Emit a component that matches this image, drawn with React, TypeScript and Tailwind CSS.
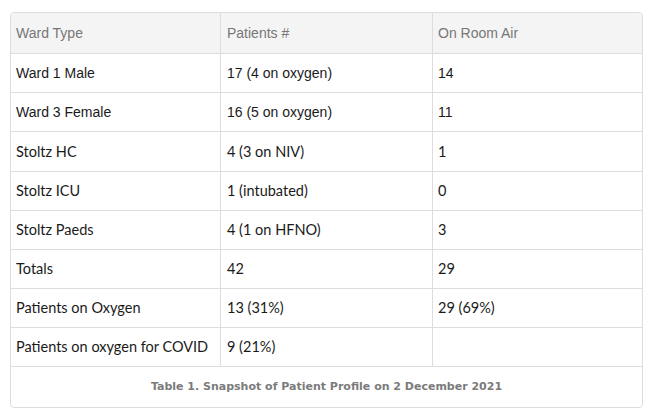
import React from "react";

const rows: { a: string; b: string; c: string; alt?: boolean; h?: string }[] = [
  { a: "Ward 1 Male", b: "17 (4 on oxygen)", c: "14", h: "h-[38px]" },
  { a: "Ward 3 Female", b: "16 (5 on oxygen)", c: "11", h: "h-[38px]" },
  { a: "Stoltz HC", b: "4 (3 on NIV)", c: "1", alt: true, h: "h-[39px]" },
  { a: "Stoltz ICU", b: "1 (intubated)", c: "0", alt: true, h: "h-[38px]" },
  { a: "Stoltz Paeds", b: "4 (1 on HFNO)", c: "3", alt: true, h: "h-[38px]" },
  { a: "Totals", b: "42", c: "29", alt: true, h: "h-[38px]" },
  { a: "Patients on Oxygen", b: "13 (31%)", c: "29 (69%)", alt: true, h: "h-[38px]" },
  { a: "Patients on oxygen for COVID", b: "9 (21%)", c: "", alt: true, h: "h-[38px]" },
];

export default function App() {
  return (
    <div className="w-[650px] h-[415px] bg-white pt-[12px] pl-[10px]">
      <div className="w-[633px] border border-[#dddddd] rounded-[4px] overflow-hidden font-['Liberation_Sans',Arial,sans-serif] text-[14px]">
        <div className="flex h-[41px] border-b border-[#dddddd] bg-[#f4f4f4] text-[#777777]">
          <div className="w-[210px] border-r border-[#dddddd] pl-[5px] flex items-center">Ward Type</div>
          <div className="w-[212px] border-r border-[#dddddd] pl-[6px] flex items-center">Patients #</div>
          <div className="flex-1 pl-[5px] flex items-center">On Room Air</div>
        </div>
        {rows.map((r) => (
          <div
            key={r.a}
            className={`flex ${r.h} box-content border-b border-[#dddddd] text-[#1a1a1a] ${
              r.alt ? "font-['Lato','Liberation_Sans',sans-serif] text-[14.5px]" : ""
            }`}
          >
            <div className="w-[210px] border-r border-[#dddddd] pl-[5px] flex items-center">{r.a}</div>
            <div className="w-[212px] border-r border-[#dddddd] pl-[6px] flex items-center">{r.b}</div>
            <div className="flex-1 pl-[5px] flex items-center">{r.c}</div>
          </div>
        ))}
        <div className="h-[40px] flex items-center justify-center font-['DejaVu_Sans',Verdana,sans-serif] font-bold text-[11px] text-[#7b7b7b]">
          Table 1. Snapshot of Patient Profile on 2 December 2021
        </div>
      </div>
    </div>
  );
}
